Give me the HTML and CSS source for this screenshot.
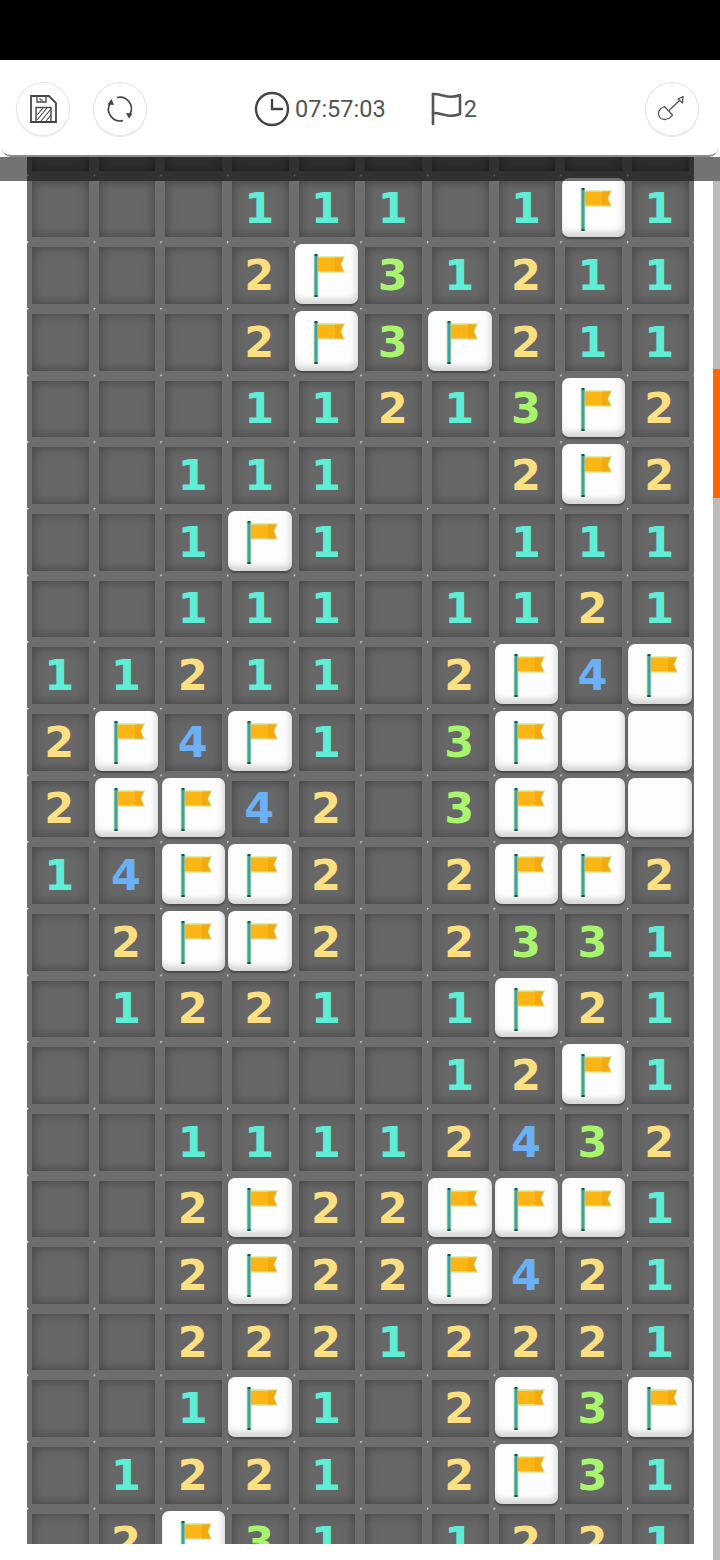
FILE: index.html
```html
<!DOCTYPE html>
<html lang="en">
<head>
  <meta charset="UTF-8" />
  <meta name="viewport" content="width=device-width, initial-scale=1.0" />
  <title>minesweeper</title>
  <link rel="stylesheet" href="styles.css">
</head>
<body>
  <div class="status-bar"></div>

  <header class="toolbar">
    <button class="round-btn" aria-label="save">
      <svg viewBox="0 0 54 54" width="54" height="54" fill="none" stroke="#444" stroke-width="1.8">
        <path d="M15 14H33L40 21V40H15Z" />
        <path d="M21 14V20H30V14" stroke-width="1.3" />
        <path d="M24 16V18H27" stroke-width="1" />
        <rect x="20" y="25.5" width="15" height="14.5" stroke-width="1.4" />
        <path d="M21 33L27 26M21 38L31 26M25 39L35 27M30 39L35 33" stroke-width="1.1" />
      </svg>
    </button>
    <button class="round-btn" aria-label="new game">
      <svg viewBox="0 0 54 54" width="54" height="54" fill="none" stroke="#444" stroke-width="1.7">
        <path d="M24 15.5A11.5 11.5 0 0 1 37 32" />
        <path d="M30 38.5A11.5 11.5 0 0 1 17.500 21" />
        <path d="M33 31L39.500 31.500L36 36.500Z" fill="#444" stroke="none" />
        <path d="M21 23L14.500 22.500L18.500 17Z" fill="#444" stroke="none" />
      </svg>
    </button>

    <div class="stat stat-time">
      <svg viewBox="0 0 36 36" width="36" height="36" fill="none" stroke="#444" stroke-width="2.4">
        <circle cx="18" cy="18" r="16" />
        <path d="M18 9V18H28" stroke-linecap="round" />
      </svg>
      <span>07:57:03</span>
    </div>

    <div class="stat stat-flags">
      <svg viewBox="0 0 32 36" width="32" height="36" fill="none" stroke="#555" stroke-width="2.6" stroke-linecap="round" stroke-linejoin="round">
        <path d="M3 3V33" />
        <path d="M3 3C11 2 17 9 30 4V23C17 28 11 21 3 22" />
      </svg>
      <span>2</span>
    </div>

    <button class="round-btn shovel-btn" aria-label="dig">
      <svg viewBox="0 0 54 54" width="54" height="54" fill="none" stroke="#555" stroke-width="1.3" stroke-linejoin="round">
        <path d="M19.500 24.500L27.500 33C24 38 17 39 14.500 35C12 31 14 26.500 19.500 24.500Z" />
        <path d="M23.500 29L34.500 18.500" />
        <path d="M38 14.500L33 17L37.500 21Z" />
      </svg>
    </button>
  </header>

  <main class="view">
    <div class="board-clip">
      <div id="board" class="board"></div>
    </div>
    <div class="scrollbar"><div class="thumb"></div></div>
    <div class="shade"></div>
  </main>

  <script src="board.js"></script>
</body>
</html>
```

FILE: styles.css
```css
body {
  margin: 0;
  background: white;
  font-family: Roboto, sans-serif;
  overflow: hidden;
}

.status-bar {
  height: 60px;
  background: black;
}

.toolbar {
  display: flex;
  align-items: center;
  box-sizing: border-box;
  height: 97px;
  margin: 0 2px;
  padding: 2px 19px 0 14px;
  gap: 23px;
  background: white;
  border-bottom: 2px solid #8c8c8c;
  border-radius: 0 0 9px 9px;
}

.round-btn {
  width: 54px;
  height: 54px;
  padding: 0;
  flex: none;
  background: white;
  border: none;
  border-radius: 50%;
  box-shadow: inset 0 0 0 1px #e4e4e4, 0 1px 1px rgba(0, 0, 0, 0.1);
}

.round-btn svg {
  display: block;
}

.shovel-btn {
  margin-left: auto;
}

.stat {
  display: flex;
  align-items: center;
  gap: 5px;
  color: #555;
  font-size: 23.5px;
}

.stat-time {
  margin-left: 84px;
}

.stat-flags {
  margin-left: 21px;
  gap: 2px;
}

.view {
  position: relative;
  display: flex;
  height: 1403px;
}

.board-clip {
  width: 713px;
  height: 1387px;
  padding-left: 27px;
  box-sizing: border-box;
  overflow: hidden;
}

.board {
  display: grid;
  grid-template-columns: repeat(10, 66.67px);
  grid-auto-rows: 66.67px;
  width: 666.7px;
  margin-top: -49px;
  background-color: #6d6d6d;
  background-image: radial-gradient(circle at 0 0, #e8e8e8 1.2px, transparent 2.2px);
  background-size: 66.67px 66.67px;
}

.cell {
  display: flex;
  align-items: center;
  justify-content: center;
  margin: 6px 5px 4px 5px;
  padding-right: 2px;
  background: #676767;
  box-shadow: inset 0 0 12px rgba(0, 0, 0, 0.38);
  font-family: "DejaVu Sans", sans-serif;
  font-size: 43px;
  font-weight: bold;
  line-height: 1;
}

.n1 { color: #5eeed6; }
.n2 { color: #fbdf80; }
.n3 { color: #a9f56e; }
.n4 { color: #6cb0f5; }

.tile {
  margin: 3px 2px 4px 1.5px;
  background: #fdfdfd;
  border-radius: 7px;
  box-shadow: inset -2px -5px 6px rgba(0, 0, 0, 0.16), 0 2px 2px rgba(0, 0, 0, 0.35);
}

.tile svg {
  display: block;
}

.scrollbar {
  width: 7px;
  margin-top: 24px;
  background: #bbb;
}

.thumb {
  height: 129px;
  margin-top: 188px;
  background: #ff6600;
}

.shade {
  position: absolute;
  top: 0;
  left: 0;
  right: 0;
  height: 24px;
  background: rgba(0, 0, 0, 0.55);
}
```

FILE: board.js
```js
const rows = [
  '..........',
  '...111.1F1',
  '...2F31211',
  '...2F3F211',
  '...11213F2',
  '..111..2F2',
  '..1F1..111',
  '..111.1121',
  '11211.2F4F',
  '2F4F1.3FWW',
  '2FF42.3FWW',
  '14FF2.2FF2',
  '.2FF2.2331',
  '.1221.1F21',
  '......12F1',
  '..11112432',
  '..2F22FFF1',
  '..2F22F421',
  '..22212221',
  '..1F1.2F3F',
  '.1221.2F31',
  '.2F31.1221'
];

const flag = `
  <svg viewBox="0 0 63 59" width="63" height="59">
    <path d="M21 11V53" stroke="#c4eaa0" stroke-width="5" />
    <path d="M22 13H49L46 20.500L49 28H22Z" fill="#fdb515" stroke="#cfe89a" stroke-width="1.500" />
    <path d="M40 13.500H48.500L45.500 20.500L48.500 27.500H40Z" fill="#f2a912" />
    <path d="M21 11V53" stroke="#3f9fa8" stroke-width="3" />
    <path d="M21 10V12M21 51V53" stroke="#1d4f50" stroke-width="3" />
  </svg>`;

const board = document.getElementById('board');

rows.forEach(row => {
  for (const c of row) {
    const cell = document.createElement('div');
    if (c === 'F') {
      cell.className = 'tile';
      cell.innerHTML = flag;
    } else if (c === 'W') {
      cell.className = 'tile';
    } else {
      cell.className = 'cell';
      if (c !== '.') {
        cell.classList.add('n' + c);
        cell.textContent = c;
      }
    }
    board.appendChild(cell);
  }
});
```
